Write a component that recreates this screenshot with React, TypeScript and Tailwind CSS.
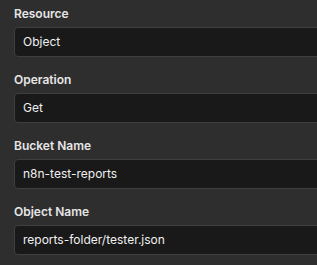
import React from "react";

const fields = [
  { label: "Resource", value: "Object" },
  { label: "Operation", value: "Get" },
  { label: "Bucket Name", value: "n8n-test-reports" },
  { label: "Object Name", value: "reports-folder/tester.json" },
];

export default function App() {
  return (
    <div
      className="w-[317px] h-[265px] overflow-hidden bg-[#2e2e2e] pt-[5px] pl-[14px] flex flex-col gap-[14px]"
      style={{ fontFamily: "Inter, 'Noto Sans', sans-serif" }}
    >
      {fields.map((f) => (
        <div key={f.label} className="flex flex-col gap-[4px]">
          <div className="h-[18px] leading-[18px] text-[12px] font-semibold text-[#e6e6e6]">
            {f.label}
          </div>
          <div className="w-[340px] h-[30px] shrink-0 flex items-center pl-[8px] rounded-[4px] border border-[#3f3f3f] bg-[#191919] text-[12px] text-[#f0f0f0] whitespace-nowrap">
            {f.value}
          </div>
        </div>
      ))}
    </div>
  );
}
